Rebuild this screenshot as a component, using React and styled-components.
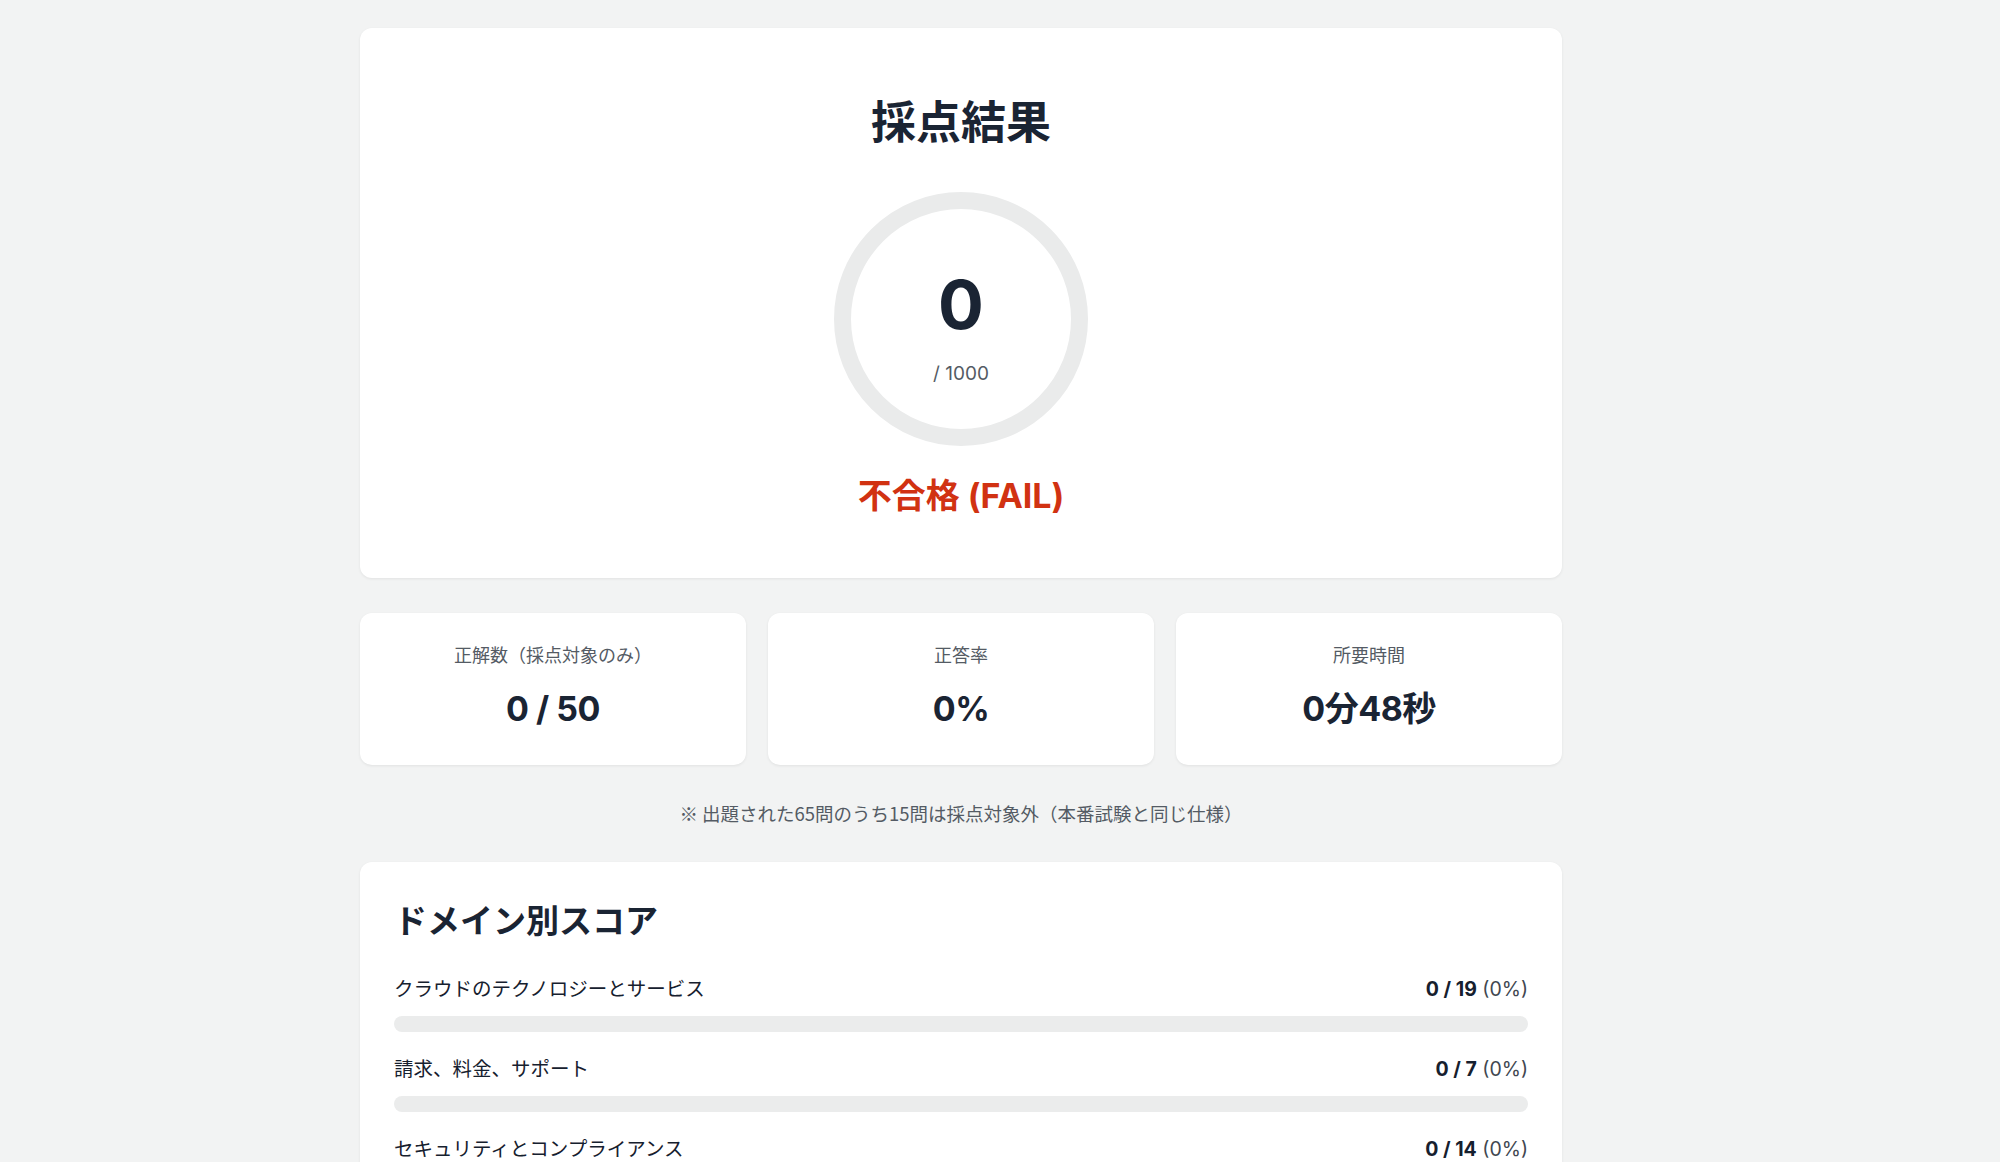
import styled, { createGlobalStyle } from 'styled-components';

const GlobalStyle = createGlobalStyle`
  body {
    margin: 0;
    background: #f2f3f3;
    font-family: 'Inter', 'Noto Sans CJK JP', sans-serif;
    color: #16202e;
  }
`;

const Page = styled.div`
  width: 1202px;
  margin-left: 360px;
  padding: 28px 0 40px;
  display: flex;
  flex-direction: column;
  gap: 35px;
`;

const Card = styled.div`
  background: #fff;
  border-radius: 12px;
  box-shadow: 0 1px 3px rgba(0, 0, 0, 0.07);
`;

const ResultCard = styled(Card)`
  padding: 68px 40px 61px;
  display: flex;
  flex-direction: column;
  align-items: center;
`;

const Title = styled.h1`
  margin: 0 0 42px;
  font-size: 45px;
  line-height: 1.2;
  font-weight: 700;
  color: #1a2433;
`;

const Ring = styled.div`
  box-sizing: border-box;
  width: 254px;
  height: 254px;
  border-radius: 50%;
  border: 17px solid #eaebeb;
  display: flex;
  flex-direction: column;
  align-items: center;
  justify-content: center;
  padding-top: 19px;
`;

const Score = styled.div`
  font-size: 68px;
  line-height: 1;
  font-weight: 700;
  color: #1a2433;
`;

const Max = styled.div`
  margin-top: 23px;
  font-size: 19px;
  line-height: 1.4;
  color: #545b64;
`;

const Verdict = styled.div`
  margin-top: 30px;
  font-size: 34px;
  line-height: 1.2;
  font-weight: 700;
  color: #d13212;
`;

const Stats = styled.div`
  display: grid;
  grid-template-columns: repeat(3, 1fr);
  gap: 22px;
`;

const StatCard = styled(Card)`
  padding: 29px 20px 35px;
  text-align: center;
`;

const StatLabel = styled.div`
  font-size: 18px;
  line-height: 1.5;
  color: #545b64;
  margin-bottom: 20px;
`;

const StatValue = styled.div`
  font-size: 34px;
  line-height: 1.2;
  font-weight: 700;
  letter-spacing: -0.5px;
  color: #1a2433;
`;

const Note = styled.p`
  margin: 0;
  text-align: center;
  font-family: 'Noto Sans CJK JP', 'Inter', sans-serif;
  font-size: 18.5px;
  line-height: 1.5;
  color: #545b64;
`;

const DomainCard = styled(Card)`
  padding: 40px 34px 40px;
`;

const DomainTitle = styled.h2`
  margin: 0 0 33px;
  font-size: 33px;
  line-height: 1.2;
  font-weight: 700;
  color: #1a2433;
`;

const Row = styled.div`
  margin-bottom: 23px;
`;

const RowHead = styled.div`
  display: flex;
  justify-content: space-between;
  align-items: center;
  margin-bottom: 12px;
  font-size: 19.5px;
  line-height: 1.5;
  color: #16202e;
`;

const Count = styled.span`
  font-weight: 700;
  color: #16202e;
`;

const Pct = styled.span`
  color: #414750;
`;

const Bar = styled.div`
  height: 16px;
  border-radius: 8px;
  background: #ebecec;
  overflow: hidden;
`;

const Fill = styled.div`
  height: 100%;
  background: #0972d3;
`;

const domains = [
  { name: 'クラウドのテクノロジーとサービス', correct: 0, total: 19 },
  { name: '請求、料金、サポート', correct: 0, total: 7 },
  { name: 'セキュリティとコンプライアンス', correct: 0, total: 14 },
  { name: 'クラウドのコンセプト', correct: 0, total: 10 },
];

export default function App() {
  return (
    <>
      <GlobalStyle />
      <Page>
        <ResultCard>
          <Title>採点結果</Title>
          <Ring>
            <Score>0</Score>
            <Max>/ 1000</Max>
          </Ring>
          <Verdict>不合格 (FAIL)</Verdict>
        </ResultCard>

        <Stats>
          <StatCard>
            <StatLabel>正解数（採点対象のみ）</StatLabel>
            <StatValue>0 / 50</StatValue>
          </StatCard>
          <StatCard>
            <StatLabel>正答率</StatLabel>
            <StatValue>0%</StatValue>
          </StatCard>
          <StatCard>
            <StatLabel>所要時間</StatLabel>
            <StatValue>0分48秒</StatValue>
          </StatCard>
        </Stats>

        <Note>※ 出題された65問のうち15問は採点対象外（本番試験と同じ仕様）</Note>

        <DomainCard>
          <DomainTitle>ドメイン別スコア</DomainTitle>
          {domains.map((d) => {
            const pct = Math.round((d.correct / d.total) * 100);
            return (
              <Row key={d.name}>
                <RowHead>
                  <span>{d.name}</span>
                  <span>
                    <Count>
                      {d.correct} / {d.total}
                    </Count>{' '}
                    <Pct>({pct}%)</Pct>
                  </span>
                </RowHead>
                <Bar>
                  <Fill style={{ width: `${pct}%` }} />
                </Bar>
              </Row>
            );
          })}
        </DomainCard>
      </Page>
    </>
  );
}
